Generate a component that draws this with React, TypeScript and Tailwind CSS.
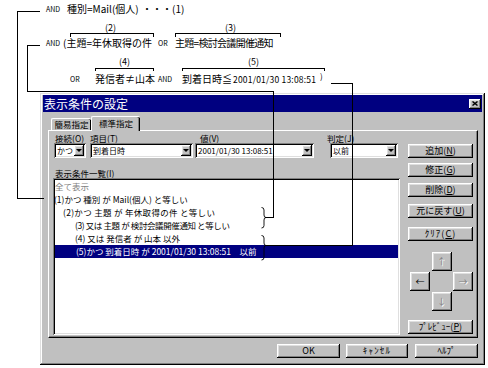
import React from "react";

const raised =
  "shadow-[inset_-1px_-1px_#000,inset_1px_1px_#fff,inset_-2px_-2px_#808080,inset_2px_2px_#dfdfdf]";
const sunken =
  "shadow-[inset_1px_1px_#808080,inset_-1px_-1px_#fff,inset_2px_2px_#000,inset_-2px_-2px_#dfdfdf]";

function Btn({ children, className = "" }: { children: React.ReactNode; className?: string }) {
  return (
    <div
      className={`flex items-center justify-center whitespace-nowrap bg-[#c0c0c0] text-[9px] leading-[12px] text-black ${raised} ${className}`}
    >
      {children}
    </div>
  );
}

function Combo({ text, className = "" }: { text: string; className?: string }) {
  return (
    <div className={`flex h-[15px] items-center bg-white pl-[3px] pr-[2px] ${sunken} ${className}`}>
      <span className="flex-1 whitespace-nowrap text-[8px] leading-[11px]">{text}</span>
      <div className={`flex h-[11px] w-[10px] shrink-0 items-center justify-center bg-[#c0c0c0] ${raised}`}>
        <svg width="6" height="3" viewBox="0 0 6 3">
          <path d="M0 0H6L3 3Z" fill="#000" />
        </svg>
      </div>
    </div>
  );
}

function Arrow({ ch, enabled = false }: { ch: string; enabled?: boolean }) {
  return (
    <div
      className={`flex items-center justify-center bg-[#c0c0c0] text-[9px] leading-[12px] ${raised} ${
        enabled ? "text-black" : "text-[#808080] [text-shadow:1px_1px_#fff]"
      }`}
    >
      {ch}
    </div>
  );
}

function Dialog() {
  return (
    <div
      className={`ml-[40px] flex h-[272px] w-[445px] flex-col bg-[#c0c0c0] px-[3px] pt-[2px] shadow-[inset_-1px_-1px_#000,inset_1px_1px_#dfdfdf,inset_-2px_-2px_#808080,inset_2px_2px_#fff]`}
    >
      {/* title bar */}
      <div className="flex h-[17px] items-center bg-[#000080] pl-[1px]">
        <span className="flex-1 text-[12px] leading-[15px] text-white">表示条件の設定</span>
        <div className={`mr-[1px] flex h-[10px] w-[12px] items-center justify-center bg-[#c0c0c0] ${raised}`}>
          <svg width="6" height="5" viewBox="0 0 6 5">
            <path d="M0.5 0.5L5.5 4.5M5.5 0.5L0.5 4.5" stroke="#000" strokeWidth="1.4" />
          </svg>
        </div>
      </div>

      {/* tabs */}
      <div className="ml-[5px] flex h-[18px] items-end pl-[3px]">
        <div className="flex h-[12px] w-[40px] items-center justify-center rounded-t-[2px] border-l border-t border-white text-[8.5px] leading-[11px] shadow-[inset_-1px_0_#000]">
          簡易指定
        </div>
        <div className="relative z-10 -mb-px flex h-[15px] w-[49px] items-start justify-center rounded-t-[2px] border-l border-t border-white bg-[#c0c0c0] pt-[1px] text-[8.5px] leading-[11px] shadow-[inset_-1px_0_#000,inset_-2px_0_#808080]">
          標準指定
        </div>
      </div>

      {/* panel */}
      <div className="ml-[5px] flex h-[208px] w-[430px] border border-white border-b-black border-r-black shadow-[inset_-1px_-1px_#808080]">
        {/* left column */}
        <div className="ml-[4px] flex w-[347px] flex-col pt-[2px]">
          <div className="flex pl-[1px]">
            <div className="flex w-[32px] flex-col">
              <span className="ml-[1px] h-[10px] whitespace-nowrap text-[8.5px] leading-[10px]">
                接続(<span className="underline">O</span>)
              </span>
              <Combo text="かつ" className="w-[32px]" />
            </div>
            <div className="ml-[4px] flex w-[103px] flex-col">
              <span className="h-[10px] whitespace-nowrap text-[8.5px] leading-[10px]">
                項目(<span className="underline">T</span>)
              </span>
              <Combo text="到着日時" className="w-[103px]" />
            </div>
            <div className="ml-[2px] flex w-[119px] flex-col">
              <span className="ml-[5px] h-[10px] whitespace-nowrap text-[8.5px] leading-[10px]">
                値(<span className="underline">V</span>)
              </span>
              <Combo text="2001/01/30 13:08:51" className="w-[119px]" />
            </div>
            <div className="ml-[16px] flex w-[68px] flex-col">
              <span className="-ml-[3px] h-[10px] whitespace-nowrap text-[8.5px] leading-[10px]">
                判定(<span className="underline">J</span>)
              </span>
              <Combo text="以前" className="w-[68px]" />
            </div>
          </div>
          <span className="mt-[10px] h-[10px] pl-[2px] text-[8.5px] leading-[10px]">
            表示条件一覧(<span className="underline">I</span>)
          </span>
          <div className={`h-[157px] w-[347px] bg-white p-[2px] ${sunken}`}>
            <div className="h-[13px] whitespace-nowrap text-[8.5px] leading-[13px] text-[#808080]">全て表示</div>
            <div className="-ml-px h-[13px] whitespace-nowrap text-[8.5px] leading-[13px]">
              (1)かつ 種別 が Mail(個人) と等しい
            </div>
            <div className="h-[13px] whitespace-nowrap pl-[8px] text-[8.5px] leading-[13px] tracking-[0.3px]">
              (2)かつ 主題 が 年休取得の件 と等しい
            </div>
            <div className="h-[13px] whitespace-nowrap pl-[20px] text-[8.5px] leading-[13px] tracking-[-0.4px]">
              (3) 又は 主題 が 検討会議開催通知 と等しい
            </div>
            <div className="h-[13px] whitespace-nowrap pl-[20px] text-[8.5px] leading-[13px]">
              (4) 又は 発信者 が 山本 以外
            </div>
            <div className="h-[13px] whitespace-nowrap bg-[#000080] pl-[21px] text-[8.5px] leading-[13px] text-white">
              (5)かつ 到着日時 が 2001/01/30 13:08:51　以前
            </div>
          </div>
        </div>

        {/* right column */}
        <div className="ml-[8px] flex w-[65px] flex-col pt-[13px]">
          <Btn className="h-[14px]">
            追加(<span className="underline">N</span>)
          </Btn>
          <Btn className="mt-[5px] h-[14px]">
            修正(<span className="underline">G</span>)
          </Btn>
          <Btn className="mt-[6px] h-[14px]">
            削除(<span className="underline">D</span>)
          </Btn>
          <Btn className="mt-[7px] h-[14px]">
            元に戻す(<span className="underline">U</span>)
          </Btn>
          <Btn className="mt-[9px] h-[14px] tracking-[1px]">
            ｸﾘｱ(<span className="underline">C</span>)
          </Btn>
          <div className="ml-[2px] mt-[11px] grid grid-cols-[20px_20px_20px] grid-rows-[19px_19px_19px] gap-x-[1.5px] gap-y-px">
            <div />
            <Arrow ch="↑" />
            <div />
            <Arrow ch="←" enabled />
            <div />
            <Arrow ch="→" />
            <div />
            <Arrow ch="↓" />
            <div />
          </div>
          <Btn className="mt-[9px] h-[14px]">
            ﾌﾟﾚﾋﾞｭｰ(<span className="underline">P</span>)
          </Btn>
        </div>
      </div>

      {/* bottom buttons */}
      <div className="mt-[6px] flex justify-end pr-[4px]">
        <Btn className="h-[14px] w-[63px]">OK</Btn>
        <Btn className="ml-[6px] h-[14px] w-[62px] tracking-[1.2px]">ｷｬﾝｾﾙ</Btn>
        <Btn className="ml-[7px] h-[14px] w-[63px]">ﾍﾙﾌﾟ</Btn>
      </div>
    </div>
  );
}

export default function App() {
  return (
    <div className="relative h-[368px] w-[488px] overflow-hidden bg-white font-['Noto_Sans_CJK_JP','Noto_Sans',sans-serif] text-black">
      {/* annotation area (diagram labels) */}
      <div className="relative h-[93px] whitespace-nowrap">
        <span className="absolute left-[46px] top-[6px] text-[7px] leading-none">AND</span>
        <span className="absolute left-[67px] top-[4px] text-[10px] leading-none">種別=Mail(個人)</span>
        <span className="absolute left-[142px] top-[4px] text-[10px] leading-none">・・・(1)</span>

        <span className="absolute left-[105px] top-[23px] text-[9px] leading-none">(2)</span>
        <span className="absolute left-[225px] top-[23px] text-[9px] leading-none">(3)</span>

        <span className="absolute left-[46px] top-[40px] text-[7px] leading-none">AND</span>
        <span className="absolute left-[63px] top-[38px] text-[10px] leading-none">(主題=年休取得の件</span>
        <span className="absolute left-[158px] top-[40px] text-[7px] leading-none">OR</span>
        <span className="absolute left-[175px] top-[38px] text-[10px] leading-none tracking-[-0.7px]">
          主題=検討会議開催通知
        </span>

        <span className="absolute left-[119px] top-[57px] text-[9px] leading-none">(4)</span>
        <span className="absolute left-[248px] top-[57px] text-[9px] leading-none">(5)</span>

        <span className="absolute left-[70px] top-[76px] text-[7px] leading-none">OR</span>
        <span className="absolute left-[95px] top-[74px] text-[10px] leading-none">発信者≠山本</span>
        <span className="absolute left-[158px] top-[76px] text-[7px] leading-none">AND</span>
        <span className="absolute left-[182px] top-[74px] text-[10px] leading-none">到着日時≦</span>
        <span className="absolute left-[233px] top-[75px] text-[8.5px] leading-none tracking-[0.2px]">
          2001/01/30 13:08:51
        </span>
        <span className="absolute left-[320px] top-[72px] text-[8px] leading-none">)</span>
      </div>

      <Dialog />

      {/* connector lines over the dialog */}
      <svg
        className="pointer-events-none absolute left-0 top-0 z-20"
        width="488"
        height="368"
        viewBox="0 0 488 368"
      >
        <g stroke="#000" strokeWidth="1" fill="none" shapeRendering="crispEdges">
          <path d="M40 11.5H17.5V198.5H44" />
          <path d="M40 45.5H27.5V91.5H273.5V217.5H265" />
          <path d="M331 83.5H352.5V245.5H265" />
          <path d="M70.5 37V33.5H153.5V37" />
          <path d="M175.5 37V33.5H280.5V37" />
          <path d="M95.5 71V68.5H153.5V71" />
          <path d="M182.5 71V68.5H324.5V71" />
        </g>
        <g stroke="#000" strokeWidth="0.9" fill="none">
          <path d="M261.5 207.5Q264 207.5 264 210V215Q264 217.5 266 217.5Q264 217.5 264 220V225.5Q264 228 261.5 228" />
          <path d="M261.5 235.5Q264 235.5 264 238V243Q264 245.5 266 245.5Q264 245.5 264 248V257.5Q264 260 261.5 260" />
        </g>
      </svg>
    </div>
  );
}
